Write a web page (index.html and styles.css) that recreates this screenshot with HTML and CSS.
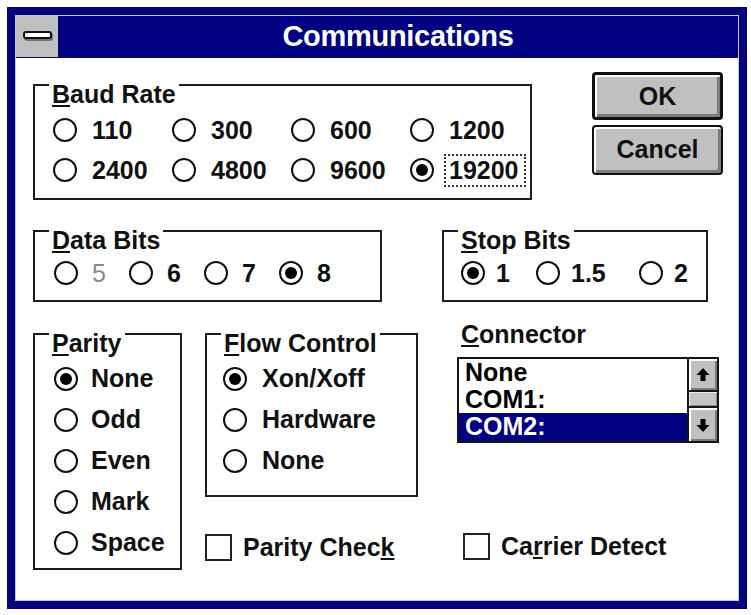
FILE: index.html
```html
<!DOCTYPE html>
<html>
<head>
<meta charset="utf-8">
<link rel="stylesheet" href="styles.css">
</head>
<body>
<div class="window">
  <div class="titlebar">
    <div class="sysmenu"><span class="sysbar"></span></div>
    <div class="title">Communications</div>
  </div>
  <div class="client">
    <div class="row row-a">
      <div class="group baud">
        <span class="legend"><u>B</u>aud Rate</span>
        <div class="radios grid4">
          <div class="radio"><span class="dot"></span><span class="lbl">110</span></div>
          <div class="radio"><span class="dot"></span><span class="lbl">300</span></div>
          <div class="radio"><span class="dot"></span><span class="lbl">600</span></div>
          <div class="radio"><span class="dot"></span><span class="lbl">1200</span></div>
          <div class="radio"><span class="dot"></span><span class="lbl">2400</span></div>
          <div class="radio"><span class="dot"></span><span class="lbl">4800</span></div>
          <div class="radio"><span class="dot"></span><span class="lbl">9600</span></div>
          <div class="radio"><span class="dot on"></span><span class="lbl focus">19200</span></div>
        </div>
      </div>
      <div class="buttons">
        <div class="btn default">OK</div>
        <div class="btn cancel">Cancel</div>
      </div>
    </div>

    <div class="row row-b">
      <div class="group databits">
        <span class="legend"><u>D</u>ata Bits</span>
        <div class="radios single data-cols">
          <div class="radio"><span class="dot"></span><span class="lbl disabled">5</span></div>
          <div class="radio"><span class="dot"></span><span class="lbl">6</span></div>
          <div class="radio"><span class="dot"></span><span class="lbl">7</span></div>
          <div class="radio"><span class="dot on"></span><span class="lbl">8</span></div>
        </div>
      </div>
      <div class="group stopbits">
        <span class="legend"><u>S</u>top Bits</span>
        <div class="radios single stop-cols">
          <div class="radio"><span class="dot on"></span><span class="lbl">1</span></div>
          <div class="radio"><span class="dot"></span><span class="lbl">1.5</span></div>
          <div class="radio"><span class="dot"></span><span class="lbl">2</span></div>
        </div>
      </div>
    </div>

    <div class="row row-c">
      <div class="group parity">
        <span class="legend"><u>P</u>arity</span>
        <div class="radios stack">
          <div class="radio"><span class="dot on"></span><span class="lbl">None</span></div>
          <div class="radio"><span class="dot"></span><span class="lbl">Odd</span></div>
          <div class="radio"><span class="dot"></span><span class="lbl">Even</span></div>
          <div class="radio"><span class="dot"></span><span class="lbl">Mark</span></div>
          <div class="radio"><span class="dot"></span><span class="lbl">Space</span></div>
        </div>
      </div>
      <div class="col-mid">
        <div class="group flow">
          <span class="legend"><u>F</u>low Control</span>
          <div class="radios stack">
            <div class="radio"><span class="dot on"></span><span class="lbl">Xon/Xoff</span></div>
            <div class="radio"><span class="dot"></span><span class="lbl">Hardware</span></div>
            <div class="radio"><span class="dot"></span><span class="lbl">None</span></div>
          </div>
        </div>
        <div class="check"><span class="box"></span><span class="lbl">Parity Chec<u>k</u></span></div>
      </div>
      <div class="col-right">
        <div class="conn-label"><u>C</u>onnector</div>
        <div class="list">
          <div class="items">
            <div class="item">None</div>
            <div class="item">COM1:</div>
            <div class="item sel">COM2:</div>
          </div>
          <div class="scroll">
            <div class="sbtn up">
              <svg width="14" height="16" viewBox="0 0 14 16"><polygon points="7,1 13.5,8 9.5,8 9.5,14 4.5,14 4.5,8 0.5,8" fill="#000"/></svg>
            </div>
            <div class="thumb"></div>
            <div class="sbtn down">
              <svg width="14" height="16" viewBox="0 0 14 16"><polygon points="7,15 13.5,8 9.5,8 9.5,2 4.5,2 4.5,8 0.5,8" fill="#000"/></svg>
            </div>
          </div>
        </div>
        <div class="check carrier"><span class="box"></span><span class="lbl">Ca<u>r</u>rier Detect</span></div>
      </div>
    </div>
  </div>
</div>
</body>
</html>
```

FILE: styles.css
```css
* { box-sizing: border-box; }
html, body { margin: 0; padding: 0; background: #ffffff; }
body {
  font-family: "Liberation Sans", Arial, sans-serif;
  font-weight: bold;
  font-size: 25px;
  color: #111;
}
u { text-decoration-thickness: 2px; text-underline-offset: 2px; }

.window {
  margin: 7px 0 0 7px;
  width: 740px;
  height: 602px;
  border: 8px solid #04047c;
  background: #ffffff;
  box-shadow: inset 0 0 0 1px #c4c4f0;
  padding: 1px;
  display: flex;
  flex-direction: column;
}

.titlebar {
  height: 42px;
  flex: none;
  display: flex;
  background: #000080;
  border-bottom: 1px solid #10104a;
}
.sysmenu {
  width: 42px;
  background: #c0c0c0;
  display: flex;
  align-items: center;
  justify-content: center;
  padding-bottom: 3px;
}
.sysbar {
  display: block;
  width: 29px;
  height: 8px;
  background: #fff;
  border: 2px solid #111;
  border-radius: 3px;
  box-shadow: 1px 2px 0 #707070;
}
.title {
  flex: 1;
  color: #fff;
  font-size: 29px;
  line-height: 41px;
  text-align: center;
  letter-spacing: -0.3px;
}

.client {
  flex: 1;
  padding: 14px 0 0 17px;
}
.row { display: flex; }
.row-a { height: 128px; }
.row-b { margin-top: 30px; gap: 60px; }
.row-c { margin-top: 19px; }

.group {
  border: 2px solid #1c1c1c;
  background: #fff;
}
.legend {
  display: block;
  width: fit-content;
  height: 27px;
  line-height: 27px;
  margin: -5px 0 0 14px;
  padding: 0 3px;
  background: #fff;
}

.radios { display: grid; }
.radio {
  display: flex;
  align-items: center;
  white-space: nowrap;
}
.dot {
  flex: none;
  width: 24px;
  height: 24px;
  border: 2px solid #111;
  border-radius: 50%;
  background: #fff;
  display: flex;
  align-items: center;
  justify-content: center;
}
.dot.on::after {
  content: "";
  width: 12px;
  height: 12px;
  border-radius: 50%;
  background: #000;
}
.lbl { line-height: 27px; margin-left: 15px; }
.lbl.disabled { color: #8a8a8a; font-weight: normal; }
.lbl.focus {
  outline: 2px dotted #333;
  outline-offset: 1px;
  padding: 0 4px 0 2px;
  margin-right: -6px;
  margin-left: 13px;
}

/* Baud Rate */
.baud {
  margin-top: 12px;
  width: 499px;
  height: 116px;
}
.grid4 {
  grid-template-columns: repeat(4, 119px);
  grid-auto-rows: 40px;
  margin-top: 2px;
  padding-left: 18px;
}

/* buttons */
.buttons {
  margin-left: 60px;
  width: 131px;
  display: flex;
  flex-direction: column;
  gap: 5px;
}
.btn {
  background: #c0c0c0;
  border: 2px solid #111;
  border-radius: 4px;
  box-shadow: inset 2px 2px 0 #ffffff, inset -3px -3px 0 #7c7c7c;
  text-align: center;
  color: #111;
}
.btn.default {
  height: 48px;
  line-height: 42px;
  border-width: 3px;
}
.btn.cancel {
  height: 50px;
  line-height: 44px;
}

/* single-row groups */
.single { grid-auto-rows: 38px; }
.databits { width: 349px; height: 72px; }
.data-cols { grid-template-columns: repeat(4, 75px); padding-left: 19px; }
.data-cols .lbl { margin-left: 14px; }
.stopbits { width: 266px; height: 72px; }
.stop-cols { grid-template-columns: 75px 103px auto; padding-left: 17px; }
.stop-cols .lbl { margin-left: 11px; }

/* stacked groups */
.stack { grid-auto-rows: 41px; margin-top: 1px; }
.parity {
  margin-top: 12px;
  width: 149px;
  height: 237px;
}
.parity .stack { padding-left: 19px; }
.parity .lbl { margin-left: 13px; }
.col-mid { margin-left: 23px; width: 213px; }
.flow {
  margin-top: 12px;
  height: 164px;
}
.flow .stack { padding-left: 16px; }
.flow .lbl { margin-left: 15px; }

.check {
  display: flex;
  align-items: center;
  height: 40px;
  margin-top: 30px;
}
.box {
  width: 27px;
  height: 27px;
  border: 2px solid #222;
  background: #fff;
  flex: none;
}
.check .lbl { margin-left: 11px; }

/* connector */
.col-right { margin-left: 39px; width: 262px; }
.conn-label { line-height: 27px; padding-left: 4px; }
.list {
  margin-top: 9px;
  height: 86px;
  border: 2px solid #151515;
  display: flex;
}
.items { flex: 1; }
.item {
  height: 27px;
  line-height: 27px;
  padding-left: 6px;
  font-size: 25px;
  color: #000;
}
.item.sel {
  height: 28px;
  background: #000080;
  color: #fff;
}
.scroll {
  width: 30px;
  border-left: 2px solid #151515;
  display: flex;
  flex-direction: column;
  background: #c0c0c0;
}
.sbtn {
  display: flex;
  align-items: center;
  justify-content: center;
  background: #c0c0c0;
  box-shadow: inset 2px 2px 0 #ffffff, inset -2px -2px 0 #7c7c7c;
}
.sbtn.up { height: 33px; border-bottom: 2px solid #151515; }
.thumb {
  height: 16px;
  border-bottom: 2px solid #151515;
  background: #c4c4c4;
  box-shadow: inset 1px 1px 0 #eeeeee, inset -1px -1px 0 #8a8a8a;
}
.sbtn.down { flex: 1; }
.check.carrier { margin-top: 83px; padding-left: 6px; }
```
